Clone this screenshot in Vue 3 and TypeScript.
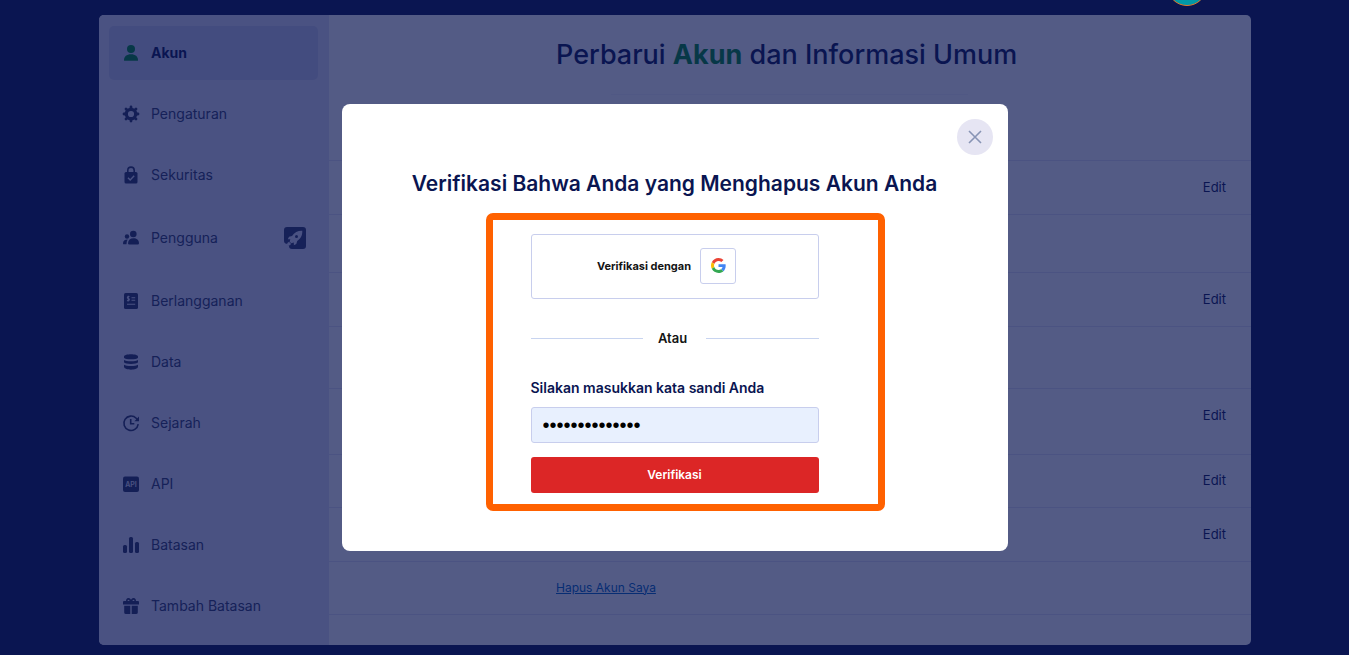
<script setup lang="ts">
import { ref } from 'vue'

interface NavItem {
  label: string
  icon: string
  badge?: boolean
}

interface SettingRow {
  size: string
  action?: 'edit' | 'delete'
}

const nav: NavItem[] = [
  { label: 'Akun', icon: 'user' },
  { label: 'Pengaturan', icon: 'gear' },
  { label: 'Sekuritas', icon: 'lock' },
  { label: 'Pengguna', icon: 'users', badge: true },
  { label: 'Berlangganan', icon: 'invoice' },
  { label: 'Data', icon: 'database' },
  { label: 'Sejarah', icon: 'history' },
  { label: 'API', icon: 'api' },
  { label: 'Batasan', icon: 'bars' },
  { label: 'Tambah Batasan', icon: 'gift' },
]

const rows: SettingRow[] = [
  { size: 'medium', action: 'edit' },
  { size: 'tall' },
  { size: 'medium', action: 'edit' },
  { size: 'taller' },
  { size: 'tallest', action: 'edit' },
  { size: 'small', action: 'edit' },
  { size: 'medium', action: 'edit' },
  { size: 'small', action: 'delete' },
]

const password = ref('kata-sandi-123')
</script>

<template>
  <div class="page">
    <div class="panel">
      <nav class="sidebar" aria-label="Pengaturan akun">
        <a
          v-for="(item, i) in nav"
          :key="item.label"
          href="#"
          class="nav-item"
          :class="{ active: i === 0, badged: item.badge }"
        >
          <svg class="nav-icon" viewBox="0 0 16 16" aria-hidden="true">
            <template v-if="item.icon === 'user'">
              <circle cx="8" cy="4" r="4" />
              <path d="M1 15.200C1 11.600 3.600 9.300 8 9.300S15 11.600 15 15.200Q15 15.800 14.300 15.800H1.700Q1 15.800 1 15.200Z" />
            </template>
            <template v-else-if="item.icon === 'gear'">
              <circle cx="8" cy="8" r="4.700" class="ring" />
              <path d="M8 2V1M8 14V15M2 8H1M14 8H15M3.800 3.800L3 3M12.200 12.200L13 13M3.800 12.200L3 13M12.200 3.800L13 3" class="teeth" />
            </template>
            <template v-else-if="item.icon === 'lock'">
              <path d="M4.800 6V3.300A3.200 3.200 0 0 1 11.200 3.300V6" class="line" />
              <rect x="1.500" y="5" width="13" height="11.500" rx="1.500" />
              <path d="M5 10.800L7.200 13L11.200 8.800" class="cut" />
            </template>
            <template v-else-if="item.icon === 'users'">
              <circle cx="10.300" cy="4" r="3.300" />
              <circle cx="4" cy="6.500" r="2.200" />
              <path d="M5 13.300C5.200 10 7.300 8.300 10.500 8.300S16 10 16 13.300Q16 14.500 14.800 14.500H6.200Q5 14.500 5 13.300ZM0 13.400C0 11 1.500 9.500 4.700 9.500Q3.500 11 3.500 14.300H1Q0 14.300 0 13.400Z" />
            </template>
            <template v-else-if="item.icon === 'invoice'">
              <rect x="1" y="0" width="14" height="16" rx="1.600" />
              <path d="M8.500 4.800H12.200M8.500 7.300H12.200M4 11.300H12.200M6.500 3.500C4.500 3 3.500 5 5.300 5.600C7.300 6.200 6.300 8.300 4 7.400M5.300 2.700V8.500" class="cut thin" />
            </template>
            <path
              v-else-if="item.icon === 'database'"
              d="M1 2.500C1-.5 15-.5 15 2.500V3.700C14 5.800 2 5.800 1 3.700ZM1 6C3 7.700 13 7.700 15 6V8.300C14 10.500 2 10.500 1 8.300ZM1 10.700C3 12.400 13 12.400 15 10.700V13C14 16.500 2 16.500 1 13Z"
            />
            <template v-else-if="item.icon === 'history'">
              <path d="M15.200 9.200A7.200 7.200 0 1 1 13.200 3.200L14.600 4.700M7.700 4V8.700H11.300" class="line" />
              <path d="M16 1.500V6.300H11.400Z" />
            </template>
            <template v-else-if="item.icon === 'api'">
              <rect x="0" y=".5" width="16" height="15.500" rx="2" />
              <text x="8" y="11" text-anchor="middle">API</text>
            </template>
            <template v-else-if="item.icon === 'bars'">
              <rect x="0" y="8" width="4" height="8" rx="1.500" />
              <rect x="6" y="0" width="4" height="16" rx="1.500" />
              <rect x="12" y="5" width="4" height="11" rx="1.500" />
            </template>
            <template v-else>
              <path d="M8 4C7 0 3.500-.2 3.800 3.500M8 4C9 0 12.500-.2 12.200 3.500" class="line" />
              <path d="M1 3H15Q16 3 16 4V6.500H0V4Q0 3 1 3ZM1.200 7.700H7.300V16H3Q1.200 16 1.200 14.500ZM8.700 7.700H14.800V14.500Q14.800 16 13 16H8.700Z" />
            </template>
          </svg>
          <span class="nav-label">{{ item.label }}</span>
          <svg v-if="item.badge" class="badge" viewBox="0 0 22 22" aria-hidden="true">
            <path class="badge-bg" d="M3 0H19Q22 0 22 3V19Q22 22 19 22H8Q5 22 5 19L4 17Q0 17 0 14V3Q0 0 3 0Z" />
            <path class="rocket" fill-rule="evenodd" d="M18.300 3.700C14 3.500 10.500 5.200 8 8.900L5 9.700L3.800 12.300L6.300 12.300L5.700 14.700L7.300 16.300L9.800 15.600L9.900 18.200L12.300 17L13.200 14C16.700 11.500 18.500 8.500 18.300 3.700ZM12.500 8A1.500 1.500 0 1 0 12.500 11A1.500 1.500 0 1 0 12.500 8Z" />
            <path class="rocket" d="M3 18.500Q2.800 15.500 5 14.700L7 16.700Q6.500 19 3 18.500Z" />
          </svg>
        </a>
      </nav>

      <main class="content">
        <header class="content-head">
          <h1>Perbarui <strong>Akun</strong> dan Informasi Umum</h1>
          <div class="rule"></div>
        </header>
        <div v-for="(row, i) in rows" :key="i" class="row" :class="row.size">
          <button v-if="row.action === 'edit'" type="button" class="edit">Edit</button>
          <a v-else-if="row.action === 'delete'" href="#" class="delete">Hapus Akun Saya</a>
        </div>
      </main>
    </div>

    <div class="overlay">
      <section class="modal" role="dialog" aria-modal="true" aria-labelledby="modal-title">
        <button type="button" class="close" aria-label="Tutup">
          <svg viewBox="0 0 14 14" aria-hidden="true"><path d="M1 1L13 13M13 1L1 13" /></svg>
        </button>
        <h2 id="modal-title">Verifikasi Bahwa Anda yang Menghapus Akun Anda</h2>
        <form class="form" @submit.prevent>
          <button type="button" class="google">
            <span>Verifikasi dengan</span>
            <span class="google-logo">
              <svg viewBox="0 0 48 48" aria-hidden="true">
                <path fill="#EA4335" d="M24 9.500c3.540 0 6.710 1.220 9.210 3.600l6.850-6.850C35.900 2.380 30.470 0 24 0 14.620 0 6.510 5.380 2.560 13.220l7.980 6.190C12.430 13.720 17.740 9.500 24 9.500z" />
                <path fill="#4285F4" d="M46.980 24.550c0-1.570-.15-3.090-.38-4.550H24v9.020h12.940c-.58 2.960-2.260 5.480-4.780 7.180l7.730 6c4.510-4.180 7.090-10.360 7.090-17.650z" />
                <path fill="#FBBC05" d="M10.530 28.590c-.48-1.450-.76-2.990-.76-4.590s.27-3.140.76-4.590l-7.980-6.190C.92 16.460 0 20.120 0 24c0 3.880.92 7.540 2.560 10.780l7.970-6.190z" />
                <path fill="#34A853" d="M24 48c6.480 0 11.930-2.130 15.890-5.810l-7.730-6c-2.150 1.450-4.920 2.300-8.160 2.300-6.260 0-11.570-4.220-13.470-9.910l-7.980 6.190C6.510 42.620 14.620 48 24 48z" />
              </svg>
            </span>
          </button>
          <div class="divider"><span>Atau</span></div>
          <label for="password">Silakan masukkan kata sandi Anda</label>
          <input id="password" v-model="password" type="password" autocomplete="current-password" />
          <button type="submit" class="submit">Verifikasi</button>
          <div class="highlight" aria-hidden="true"></div>
        </form>
      </section>
    </div>
    <div class="avatar" aria-hidden="true"></div>
  </div>
</template>

<style>
body {
  margin: 0;
  background: #0a1551;
}
</style>

<style scoped>
* {
  box-sizing: border-box;
}

.page {
  position: relative;
  min-height: 100vh;
  padding: 15px 98px 10px 99px;
  overflow: hidden;
  background: #0a1551;
  color: #0a1551;
  font-family: Inter, 'Liberation Sans', sans-serif;
}

button,
input {
  font-family: inherit;
}

.panel {
  display: flex;
  overflow: hidden;
  border-radius: 5px;
  background: #fff;
}

.sidebar {
  display: flex;
  flex: 0 0 230px;
  flex-direction: column;
  gap: 7px;
  padding: 11px 11px 12px 10px;
  background: #e0e1f3;
}

.nav-item {
  display: flex;
  align-items: center;
  height: 54px;
  padding: 0 12px 0 14px;
  border-radius: 5px;
  color: #343c6a;
  font-size: 14px;
  text-decoration: none;
}

.nav-item.badged {
  height: 58px;
}

.nav-item.active {
  background: #c9cdea;
  color: #0a1551;
  font-weight: 700;
}

.nav-icon {
  flex: none;
  width: 16px;
  height: 16px;
  margin-right: 12px;
  overflow: visible;
  fill: #2e3663;
}

.active .nav-icon {
  fill: #018930;
}

.nav-icon .line {
  fill: none;
  stroke: #2e3663;
  stroke-width: 1.6;
}

.nav-icon .ring {
  fill: none;
  stroke: #2e3663;
  stroke-width: 3.2;
}

.nav-icon .teeth {
  fill: none;
  stroke: #2e3663;
  stroke-width: 2.8;
  stroke-linecap: round;
}

.nav-icon .cut {
  fill: none;
  stroke: #e0e1f3;
  stroke-width: 1.4;
}

.nav-icon .thin {
  stroke-width: 1.1;
}

.nav-icon text {
  fill: #e0e1f3;
  font-size: 7px;
  font-weight: 600;
}

.nav-label {
  flex: 1;
  padding-bottom: 2px;
}

.badge {
  width: 22px;
  height: 22px;
}

.badge-bg {
  fill: #343c6a;
}

.rocket {
  fill: #e0e1f3;
}

.content {
  flex: 1;
}

.content-head {
  height: 146px;
  padding: 20px 25px 0 227px;
  border-bottom: 1px solid #e3e5f5;
}

h1 {
  margin: 0;
  font-size: 27px;
  font-weight: 500;
  line-height: 40px;
  white-space: nowrap;
}

h1 strong {
  color: #018930;
  font-weight: 700;
}

.rule {
  width: 357px;
  height: 1px;
  margin: 19px 0 0 55px;
  background: #f6f6fb;
}

.row {
  display: flex;
  align-items: center;
  justify-content: flex-end;
  padding: 0 25px 2px 227px;
  border-bottom: 1px solid #e3e5f5;
}

.small {
  height: 53px;
}

.medium {
  height: 54px;
}

.tall {
  height: 58px;
}

.taller {
  height: 62px;
}

.tallest {
  height: 66px;
  padding-bottom: 14px;
}

.edit {
  padding: 0;
  border: 0;
  background: none;
  color: #0a1551;
  font-size: 13px;
}

.delete {
  margin-right: auto;
  color: #0066c3;
  font-size: 12px;
}

.overlay {
  position: absolute;
  inset: 0;
  display: flex;
  align-items: center;
  justify-content: center;
  background: rgba(10, 21, 81, 0.7);
}

.modal {
  position: relative;
  display: flex;
  flex-direction: column;
  align-items: center;
  width: 666px;
  max-width: 94%;
  padding: 64px 40px 58px;
  border-radius: 8px;
  background: #fff;
}

.close {
  position: absolute;
  top: 15px;
  right: 15px;
  display: flex;
  align-items: center;
  justify-content: center;
  width: 36px;
  height: 36px;
  padding: 0;
  border: 0;
  border-radius: 50%;
  background: #e6e5f3;
}

.close svg {
  width: 14px;
  height: 14px;
  fill: none;
  stroke: #8894b5;
  stroke-width: 1.6;
}

h2 {
  margin: 0 0 34px;
  font-size: 21px;
  font-weight: 600;
  line-height: 32px;
}

.form {
  position: relative;
  display: flex;
  flex-direction: column;
  width: 288px;
}

.google {
  display: flex;
  align-items: center;
  justify-content: center;
  gap: 9px;
  height: 65px;
  padding: 0 36px 2px 20px;
  margin-bottom: 29px;
  border: 1px solid #c8ceed;
  border-radius: 3px;
  background: #fff;
  color: #141414;
  font-size: 11px;
  font-weight: 700;
}

.google-logo {
  display: flex;
  align-items: center;
  justify-content: center;
  width: 36px;
  height: 36px;
  border: 1px solid #c8ceed;
  border-radius: 3px;
}

.google-logo svg {
  width: 15px;
  height: 15px;
}

.divider {
  display: flex;
  align-items: center;
  gap: 15px;
  height: 20px;
  margin-bottom: 30px;
  color: #141414;
  font-size: 13px;
  font-weight: 600;
}

.divider span {
  padding-right: 4px;
}

.divider::before,
.divider::after {
  flex: 1;
  height: 1px;
  background: #c8d4f0;
  content: '';
}

label {
  margin-bottom: 9px;
  font-size: 14px;
  font-weight: 600;
  line-height: 20px;
}

input {
  width: 100%;
  height: 36px;
  margin-bottom: 14px;
  padding: 0 11px;
  border: 1px solid #c8ceed;
  border-radius: 3px;
  background: #e8f0fe;
  color: #000;
  font-family: 'Liberation Sans', Arial, sans-serif;
  font-size: 20px;
}

.submit {
  height: 36px;
  padding: 0 6px 2px;
  border: 0;
  border-radius: 3px;
  background: #dc2626;
  color: #fff;
  font-size: 12px;
  font-weight: 600;
}

.highlight {
  position: absolute;
  inset: -21px -66px -18px -45px;
  border: 7px solid #ff6100;
  border-radius: 7px;
  pointer-events: none;
}

.avatar {
  position: absolute;
  top: -34px;
  right: 142px;
  width: 40px;
  height: 40px;
  border: 1px solid #e07a2c;
  border-radius: 50%;
  background: #0099a8;
}
</style>
